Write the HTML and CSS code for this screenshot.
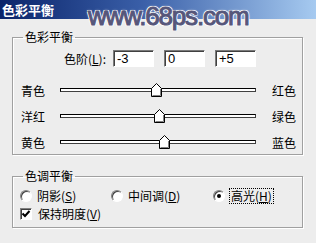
FILE: index.html
```html
<!DOCTYPE html>
<html lang="zh">
<head>
    <meta charset="UTF-8">
    <title>色彩平衡</title>
    <link rel="stylesheet" href="styles.css">
</head>
<body>
    <div class="window">
        <div class="titlebar">色彩平衡</div>
        <div class="watermark">www.68ps.com</div>

        <div class="dialog">
            <fieldset class="group">
                <legend>色彩平衡</legend>
                <div class="levels">
                    <span class="levels-label">色阶(<u>L</u>):</span>
                    <input class="field" type="text" value="-3">
                    <input class="field" type="text" value="0">
                    <input class="field" type="text" value="+5">
                </div>
                <div class="sliders">
                    <div class="slider-row">
                        <span class="side-left">青色</span>
                        <div class="track"><span class="thumb" style="left: 90px"><svg width="11" height="14" viewBox="0 0 11 14"><path d="M0.5 13.5 V5.5 L5.5 0.5 L10.5 5.5 V13.5 Z" fill="#fff" stroke="#000"/><path d="M1.5 12.5 H9.5 V6" fill="none" stroke="#808080"/></svg></span></div>
                        <span class="side-right">红色</span>
                    </div>
                    <div class="slider-row">
                        <span class="side-left">洋红</span>
                        <div class="track"><span class="thumb" style="left: 93px"><svg width="11" height="14" viewBox="0 0 11 14"><path d="M0.5 13.5 V5.5 L5.5 0.5 L10.5 5.5 V13.5 Z" fill="#fff" stroke="#000"/><path d="M1.5 12.5 H9.5 V6" fill="none" stroke="#808080"/></svg></span></div>
                        <span class="side-right">绿色</span>
                    </div>
                    <div class="slider-row">
                        <span class="side-left">黄色</span>
                        <div class="track"><span class="thumb" style="left: 98px"><svg width="11" height="14" viewBox="0 0 11 14"><path d="M0.5 13.5 V5.5 L5.5 0.5 L10.5 5.5 V13.5 Z" fill="#fff" stroke="#000"/><path d="M1.5 12.5 H9.5 V6" fill="none" stroke="#808080"/></svg></span></div>
                        <span class="side-right">蓝色</span>
                    </div>
                </div>
            </fieldset>

            <fieldset class="group tone">
                <legend>色调平衡</legend>
                <div class="radios">
                    <label class="option opt-shadow"><span class="radio"></span>阴影(<u>S</u>)</label>
                    <label class="option opt-mid"><span class="radio"></span>中间调(<u>D</u>)</label>
                    <label class="option"><span class="radio checked"></span><span class="focus">高光(<u>H</u>)</span></label>
                </div>
                <label class="option keep"><span class="checkbox"><svg width="10" height="10" viewBox="0 0 10 10"><path d="M1.5 4.5 L4 7 L8.5 2" fill="none" stroke="#000" stroke-width="2"/></svg></span>保持明度(<u>V</u>)</label>
            </fieldset>
        </div>
    </div>
</body>
</html>
```
FILE: styles.css
```css
body {
    margin: 0;
    padding: 0;
    background-color: #ededed;
    font-family: "Noto Sans CJK SC", "Liberation Sans", sans-serif;
    font-size: 12px;
    color: #000;
}

.window {
    position: relative;
    width: 316px;
    height: 243px;
    overflow: hidden;
}

/* Barra de título */
.titlebar {
    height: 19px;
    line-height: 19px;
    padding-left: 2px;
    background: linear-gradient(to right, #0a246a, #3a5fa8 45%, #a6caf0);
    color: #fff;
    font-weight: bold;
    font-size: 13px;
}

.watermark {
    position: absolute;
    top: 1px;
    left: 88px;
    font-family: "Liberation Sans", sans-serif;
    font-size: 26px;
    letter-spacing: -1.2px;
    color: #56567a;
    -webkit-text-stroke: 1px #56567a;
    text-shadow: 1px 1px 0 #fff, -1px -1px 0 #fff, 1px -1px 0 #fff, -1px 1px 0 #fff, 0 0 3px #fff;
}

.dialog {
    padding: 11px 13px 0 12px;
}

/* Cajas de grupo */
.group {
    margin: 0;
    padding: 0;
    border: 1px solid #a0a0a0;
    box-shadow: inset 1px 1px 0 #fff, 1px 1px 0 #fff;
    min-width: 0;
}

.group legend {
    margin-left: 10px;
    padding: 0 2px;
    line-height: 14px;
}

.levels {
    display: flex;
    align-items: center;
    margin-top: 6px;
    height: 17px;
}

.levels-label {
    width: 93px;
    text-align: right;
    margin-right: 7px;
}

.field {
    box-sizing: border-box;
    width: 41px;
    height: 17px;
    margin: 0 10px 0 0;
    padding: 0 3px;
    border: 1px solid;
    border-color: #7a7a7a #fff #fff #7a7a7a;
    box-shadow: inset 1px 1px 0 #404040;
    background-color: #fff;
    font-family: "Liberation Sans", sans-serif;
    font-size: 13px;
    outline: none;
}

.sliders {
    margin-top: 13px;
    padding-bottom: 2px;
}

.slider-row {
    display: flex;
    align-items: center;
    height: 20px;
    margin-bottom: 6px;
}

.slider-row:last-child {
    margin-bottom: 0;
}

.side-left {
    width: 39px;
    padding-left: 8px;
}

.track {
    position: relative;
    box-sizing: border-box;
    width: 196px;
    height: 4px;
    background-color: #fff;
    border: 1px solid #000;
    border-bottom-color: #404040;
    border-right-color: #404040;
}

.thumb {
    position: absolute;
    top: -6px;
    width: 11px;
    height: 14px;
}

.thumb svg {
    display: block;
}

.side-right {
    margin-left: 16px;
}

/* Balance de tono */
.tone {
    margin-top: 14px;
    padding-bottom: 6px;
}

.radios {
    display: flex;
    margin-top: 6px;
    height: 14px;
    align-items: center;
    padding-left: 7px;
}

.option {
    display: flex;
    align-items: center;
    line-height: 14px;
}

.opt-shadow {
    width: 91px;
}

.opt-mid {
    width: 102px;
}

.radio {
    box-sizing: border-box;
    width: 12px;
    height: 12px;
    margin-right: 5px;
    border-radius: 50%;
    border: 1px solid;
    border-color: #808080 #fff #fff #808080;
    background-color: #fff;
    box-shadow: inset 1px 1px 0 #404040;
    position: relative;
}

.radio.checked::after {
    content: "";
    position: absolute;
    left: 3px;
    top: 3px;
    width: 4px;
    height: 4px;
    border-radius: 50%;
    background-color: #000;
}

.focus {
    outline: 1px dotted #000;
    outline-offset: 0;
    padding: 0 1px;
}

.keep {
    margin-top: 4px;
    padding-left: 7px;
}

.checkbox {
    box-sizing: border-box;
    width: 12px;
    height: 12px;
    margin-right: 6px;
    border: 1px solid;
    border-color: #808080 #fff #fff #808080;
    box-shadow: inset 1px 1px 0 #404040;
    background-color: #fff;
    display: flex;
    align-items: center;
    justify-content: center;
}

.checkbox svg {
    display: block;
}
```
